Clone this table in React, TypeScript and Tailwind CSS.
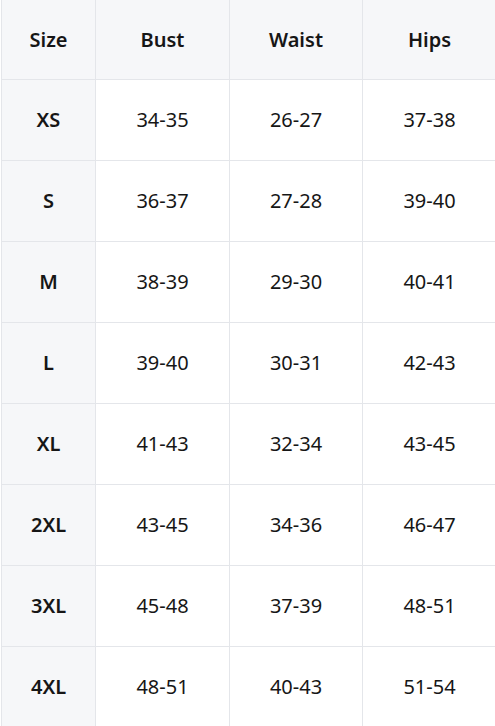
const HEAD = ['Size', 'Bust', 'Waist', 'Hips'];

const ROWS: [string, string, string, string][] = [
  ['XS', '34-35', '26-27', '37-38'],
  ['S', '36-37', '27-28', '39-40'],
  ['M', '38-39', '29-30', '40-41'],
  ['L', '39-40', '30-31', '42-43'],
  ['XL', '41-43', '32-34', '43-45'],
  ['2XL', '43-45', '34-36', '46-47'],
  ['3XL', '45-48', '37-39', '48-51'],
  ['4XL', '48-51', '40-43', '51-54'],
];

export default function App() {
  return (
    <div
      className="h-[726px] w-[495px] overflow-hidden bg-white text-[20px] text-[#161616]"
      style={{ fontFamily: '"Noto Sans", "Open Sans", sans-serif' }}
    >
      <div className="ml-px grid grid-cols-[94px_134px_133px_133px] border-l border-[#e4e6ea]">
        {/* Header */}
        {HEAD.map((h, i) => (
          <div
            key={h}
            className={`flex h-[80px] items-center justify-center border-b border-[#e4e6ea] bg-[#f6f7f9] font-semibold ${
              i < 3 ? 'border-r' : ''
            }`}
          >
            {h}
          </div>
        ))}

        {/* Body */}
        {ROWS.map((row) =>
          row.map((cell, i) => (
            <div
              key={row[0] + i}
              className={`flex h-[81px] items-center justify-center border-b border-[#e4e6ea] ${
                i === 0 ? 'bg-[#f6f7f9] font-semibold' : 'bg-white'
              } ${i < 3 ? 'border-r' : ''}`}
            >
              {cell}
            </div>
          ))
        )}
      </div>
    </div>
  );
}
